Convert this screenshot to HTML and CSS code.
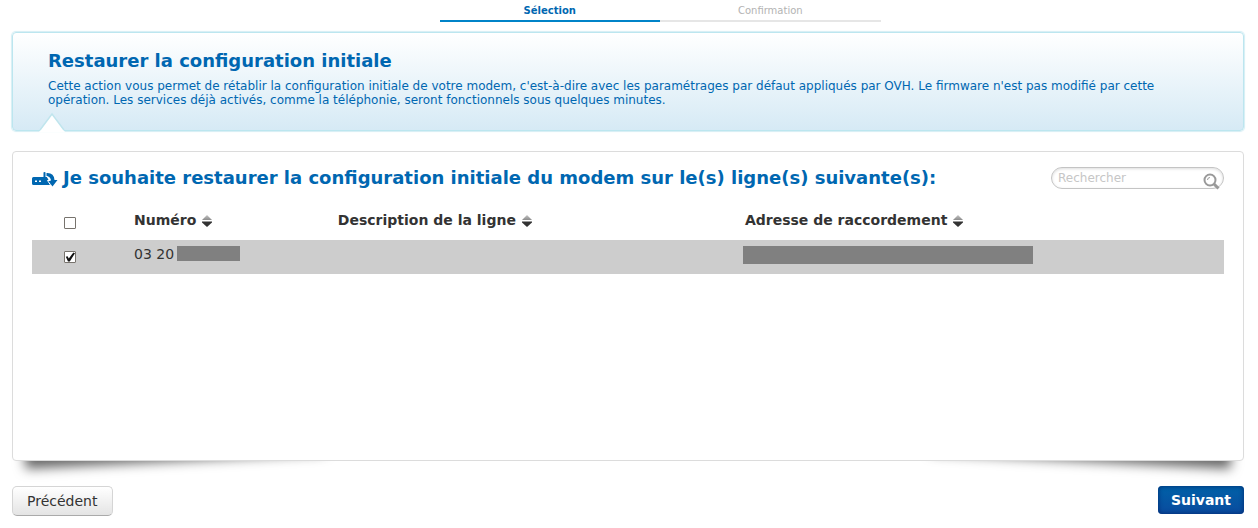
FILE: index.html
```html
<!DOCTYPE html>
<html lang="fr">
<head>
<meta charset="utf-8">
<meta name="viewport" content="width=device-width, initial-scale=1">
<title>Restaurer la configuration initiale</title>
<link rel="stylesheet" href="styles.css">
</head>
<body>
<svg class="sprite" aria-hidden="true">
  <defs>
    <linearGradient id="sort-up" x1="0" y1="0" x2="0" y2="1"><stop offset="0" stop-color="#c4c4c4"/><stop offset="1" stop-color="#8c8c8c"/></linearGradient>
    <symbol id="sort" viewBox="0 0 12 12">
      <path fill="url(#sort-up)" d="M6 0 11 5H1z"/>
      <path fill="#333" d="M1 6.500H11V7.500L6 12 1 7.500z"/>
    </symbol>
  </defs>
</svg>
<main class="page">
  <ol class="steps">
    <li class="step step-active">Sélection</li>
    <li class="step">Confirmation</li>
  </ol>

  <section class="notice">
    <h1 class="title">Restaurer la configuration initiale</h1>
    <p class="notice-text">Cette action vous permet de rétablir la configuration initiale de votre modem, c'est-à-dire avec les paramétrages par défaut appliqués par OVH. Le firmware n'est pas modifié par cette opération. Les services déjà activés, comme la téléphonie, seront fonctionnels sous quelques minutes.</p>
    <svg class="notch" viewBox="0 0 26 20" aria-hidden="true"><path d="M0 20 13 2 26 20z" fill="#fff"/><path d="M1 18 13 2 25 18" fill="none" stroke="#c0e5ed" stroke-width="1.500"/></svg>
  </section>

  <section class="panel">
    <div class="panel-body">
      <header class="panel-head">
        <svg class="modem" viewBox="0 0 26 16" aria-hidden="true">
          <path fill="#0067b1" d="M1.500 6H11.500V1.500Q11.500 1 12.500 1T13.500 1.500V6H15L19 14H1.500Q0 14 0 12.500V7.500Q0 6 1.500 6z"/>
          <path fill="#fff" d="M3 9.500H5V11H3zM7 9.500H9V11H7z"/>
          <path fill="#0067b1" d="M14.500 2Q22 1.500 22.500 9H25.500L20.500 15.500 16 9.500H19Q18.500 5.500 14.500 5z"/>
          <path fill="none" stroke="#fff" d="M14.500 5.500Q18 6 18 9.500H15.500L18.500 14"/>
        </svg>
        <h2 class="title">Je souhaite restaurer la configuration initiale du modem sur le(s) ligne(s) suivante(s):</h2>
        <label class="search">
          <input class="search-input" type="search" placeholder="Rechercher" aria-label="Rechercher">
          <svg class="search-icon" viewBox="0 0 18 18" aria-hidden="true">
            <circle cx="8" cy="8" r="5.500" fill="#fff" stroke="#999" stroke-width="2"/>
            <path d="M5.500 8Q5.500 5.500 8 5.500" fill="none" stroke="#999"/>
            <path d="M12 12 16.500 16.500" stroke="#999" stroke-width="3"/>
          </svg>
        </label>
      </header>
      <table class="lines">
        <colgroup><col class="col-check"><col class="col-number"><col class="col-desc"><col></colgroup>
        <thead>
          <tr>
            <th><input class="check" type="checkbox" aria-label="Tout sélectionner"></th>
            <th>Numéro <svg class="sort"><use href="#sort"/></svg></th>
            <th>Description de la ligne <svg class="sort"><use href="#sort"/></svg></th>
            <th>Adresse de raccordement <svg class="sort"><use href="#sort"/></svg></th>
          </tr>
        </thead>
        <tbody>
          <tr>
            <td><input class="check" type="checkbox" aria-label="Sélectionner la ligne" checked></td>
            <td><div class="number">03 20 <span class="mask mask-number"></span></div></td>
            <td></td>
            <td><div class="mask mask-address"></div></td>
          </tr>
        </tbody>
      </table>
    </div>
  </section>

  <footer class="actions">
    <button class="button button-back" type="button">Précédent</button>
    <button class="button button-next" type="button">Suivant</button>
  </footer>
</main>
</body>
</html>
```
FILE: styles.css
```css
* { box-sizing: border-box; }
body {
  margin: 0;
  background: #fff;
  color: #333;
  font-family: "DejaVu Sans", Verdana, sans-serif;
  font-size: 14px;
}
.sprite { position: absolute; width: 0; height: 0; }
.page { padding: 0 14px 12px 12px; }

.steps {
  display: flex;
  width: 35.8%;
  margin: 0 0 10px 34.7%;
  padding: 0;
  list-style: none;
  font-size: 10px;
  line-height: 18px;
  text-align: center;
}
.step { flex: 1; padding-top: 2px; border-bottom: 2px solid #e6e6e6; color: #b3b3b3; }
.step-active { border-color: #0083c8; color: #0067b1; font-weight: bold; }

.title { margin: 0; color: #0067b1; font-size: 18px; line-height: 22px; font-weight: bold; }

.notice {
  position: relative;
  padding: 17px 35px 23px;
  border: 1px solid #bce6ef;
  border-radius: 4px;
  background: linear-gradient(#fff, #d6eaf5);
  box-shadow: 0 0 1px 1px #d5eef4;
}
.notice-text { margin: 7px 0 0; color: #0067b1; font-size: 12px; line-height: 14px; }
.notch { position: absolute; left: 26px; bottom: -2px; width: 26px; height: 20px; }

.panel { position: relative; z-index: 0; margin-top: 20px; }
.panel::before,
.panel::after {
  content: "";
  position: absolute;
  z-index: -1;
  bottom: 15px;
  width: 300px;
  height: 20px;
  box-shadow: 0 15px 12px #666;
}
.panel::before { left: 12px; transform: rotate(-3deg); }
.panel::after { right: 12px; transform: rotate(3deg); }
.panel-body {
  min-height: 310px;
  padding: 15px 19px;
  border: 1px solid #dcdcdc;
  border-radius: 4px;
  background: #fff;
}
.panel-head { display: flex; align-items: center; }
.modem { width: 26px; height: 16px; margin: 2px 5px 0 0; flex: none; }
.search { position: relative; flex: none; width: 173px; margin-left: auto; }
.search-input {
  display: block;
  width: 100%;
  height: 22px;
  padding: 0 28px 0 6px;
  border: 1px solid #c4c4c4;
  border-radius: 11px;
  outline: 0;
  background: #fff;
  box-shadow: inset 0 1px 3px #ddd;
  appearance: none;
  font: 12px "DejaVu Sans", Verdana, sans-serif;
}
.search-input::placeholder { color: #c6c6c6; }
.search-icon { position: absolute; right: 4px; top: 5px; width: 18px; height: 18px; }

.lines { width: 100%; margin-top: 10px; border-collapse: collapse; table-layout: fixed; text-align: left; }
.col-check { width: 8.56%; }
.col-number { width: 17.1%; }
.col-desc { width: 34.15%; }
.lines th { height: 41px; padding: 0; vertical-align: middle; line-height: 20px; }
.lines tbody tr { height: 34px; background: #cdcdcd; }
.lines td { padding: 6px 0 0; vertical-align: top; line-height: 16px; }
.sort { width: 12px; height: 12px; vertical-align: -2px; }
.check {
  display: block;
  width: 12px;
  height: 12px;
  margin: 5px 0 0 32px;
  border: 1px solid #77736d;
  border-radius: 1px;
  background: #fff;
  appearance: none;
}
.lines th .check { margin-top: 7px; }
.check:checked::before {
  content: "";
  display: block;
  height: 10px;
  background: #111;
  clip-path: polygon(8% 48%, 26% 42%, 38% 64%, 84% 4%, 100% 12%, 48% 96%, 30% 96%);
}
.number { display: flex; gap: 3px; }
.mask { display: block; background: #808080; }
.mask-number { width: 63px; height: 15px; }
.mask-address { width: 290px; max-width: 100%; height: 18px; margin-left: -2px; }

.actions { display: flex; justify-content: space-between; align-items: flex-start; margin-top: 25px; }
.button { font: 14px "DejaVu Sans", Verdana, sans-serif; border-radius: 4px; }
.button-back {
  height: 30px;
  padding: 0 15px 0 14px;
  border: 1px solid #d5d5d5;
  border-bottom-color: #aaa;
  border-radius: 5px;
  background: linear-gradient(#fff, #e4e4e4);
  color: #333;
}
.button-next {
  height: 28px;
  padding: 0 13px;
  border: 0;
  background: linear-gradient(#0061a8, #0a4b9e);
  box-shadow: inset 0 0 5px #00286e;
  color: #fff;
  font-weight: bold;
}
```
